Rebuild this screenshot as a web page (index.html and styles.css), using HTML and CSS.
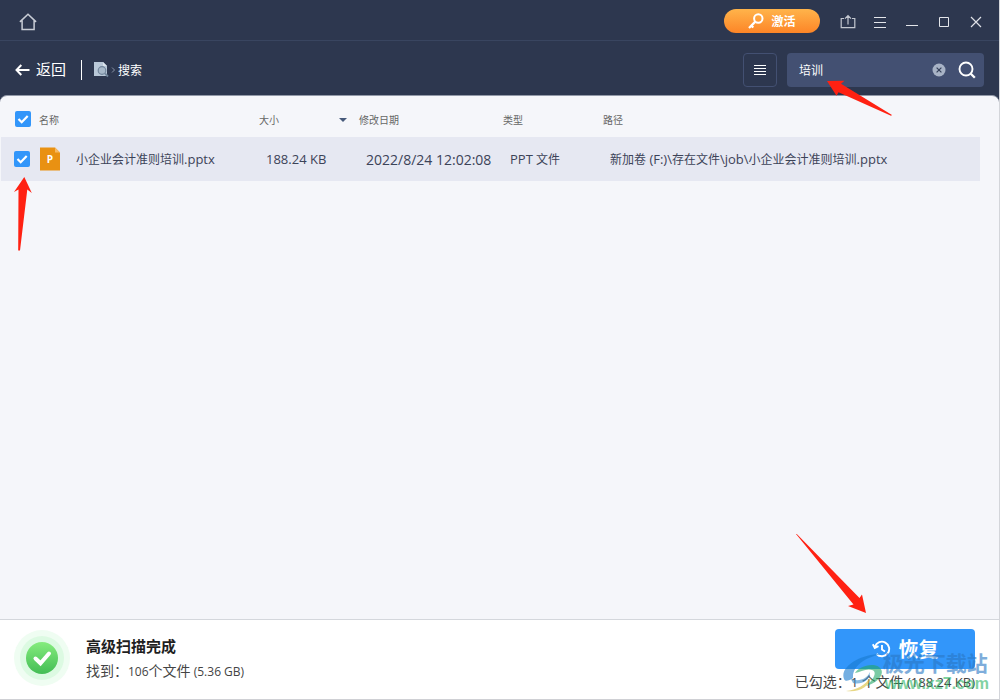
FILE: index.html
```html
<!DOCTYPE html>
<html lang="zh-CN">
<head>
<meta charset="utf-8">
<title>文件恢复</title>
<link rel="stylesheet" href="styles.css">
</head>
<body>
<div class="window">
  <header class="titlebar">
    <button class="icon-btn" aria-label="主页">
      <svg width="18" height="18" viewBox="0 0 18 18" fill="none" stroke="#c9cdd6" stroke-width="1.500"><path d="M.9 8.900 9 1.300l8.100 7.600M3.100 7.500v9.100h12V7.500"/></svg>
    </button>
    <div class="title-actions">
      <button class="activate">
        <svg width="16" height="16" viewBox="0 0 16 16" fill="none" stroke="#fff" stroke-width="2"><circle cx="10.300" cy="5.500" r="4.200"/><path d="M7.300 8.600 1 15M3 12.300l2.300 2.200" stroke-width="2.300"/></svg>
        激活
      </button>
      <button class="icon-btn" aria-label="导出">
        <svg width="16" height="16" viewBox="0 0 16 16" fill="none" stroke="#c3c7d0" stroke-width="1.200"><path d="M4 4.500H1.200v9.200h13.600V4.500H12M8 10.500V1.800M5 4.700l3-3 3 3"/></svg>
      </button>
      <button class="icon-btn" aria-label="菜单">
        <svg width="16" height="16" viewBox="0 0 16 16" stroke="#e3e5ea"><path d="M2 3.500h12M2 8.500h12M2 13.500h12"/></svg>
      </button>
      <button class="icon-btn" aria-label="最小化">
        <svg width="16" height="16" viewBox="0 0 16 16" stroke="#e3e5ea"><path d="M2 11.500h12"/></svg>
      </button>
      <button class="icon-btn" aria-label="最大化">
        <svg width="16" height="16" viewBox="0 0 16 16" fill="none" stroke="#e3e5ea"><path d="M3.500 3.500h9v9h-9z"/></svg>
      </button>
      <button class="icon-btn" aria-label="关闭">
        <svg width="16" height="16" viewBox="0 0 16 16" stroke="#dfe1e7" stroke-width="1.200"><path d="m3 3 10 10M13 3 3 13"/></svg>
      </button>
    </div>
  </header>

  <nav class="toolbar">
    <button class="back">
      <svg width="15" height="12" viewBox="0 0 15 12" fill="none" stroke="#fff" stroke-width="2"><path d="M1.500 6H14.500M6.300 1 1.500 6l4.800 5"/></svg>
      <span class="back-text">返回</span>
    </button>
    <span class="divider"></span>
    <div class="crumbs">
      <svg width="15" height="16" viewBox="0 0 15 16"><path d="M0 0h9l4 4v10H0z" fill="#b9c8d8"/><path d="M9 0v4h4z" fill="#dbe4ed"/><circle cx="8" cy="8.500" r="3.800" fill="#a7b8c9" stroke="#71859b" stroke-width="1.200"/><path d="m11 11.500 3 3" stroke="#71859b" stroke-width="1.800"/></svg>
      <svg width="5" height="8" viewBox="0 0 5 8" fill="none" stroke="#8993a6"><path d="m1 1.500 2.500 2.500L1 6.500"/></svg>
      <span>搜索</span>
    </div>
    <button class="view-btn" aria-label="列表视图">
      <svg width="14" height="12" viewBox="0 0 14 12" stroke="#fff"><path d="M1 1.500h12M1 4.500h12M1 7.500h12M1 10.500h12"/></svg>
    </button>
    <form class="search">
      <input class="search-input" type="text" value="培训" aria-label="搜索">
      <button class="icon-btn" type="reset" aria-label="清除">
        <svg width="14" height="14" viewBox="0 0 14 14"><circle cx="7" cy="7" r="6.500" fill="#a8b3c6"/><path d="m4.600 4.600 4.800 4.800M9.400 4.600 4.600 9.400" stroke="#35405a" stroke-width="1.200"/></svg>
      </button>
      <button class="icon-btn" type="button" aria-label="查找">
        <svg width="18" height="18" viewBox="0 0 18 18" fill="none" stroke="#fff"><circle cx="8" cy="8" r="6.500" stroke-width="1.900"/><path d="m12.800 12.800 4 4" stroke-width="2.300"/></svg>
      </button>
    </form>
  </nav>

  <main class="panel">
    <table class="files">
      <colgroup><col class="c-name"><col class="c-size"><col class="c-date"><col class="c-type"><col></colgroup>
      <thead>
        <tr>
          <th><div class="cell"><input class="check" type="checkbox" checked aria-label="全选">名称</div></th>
          <th><div class="cell sortable">大小<svg width="8" height="5" viewBox="0 0 8 5"><path d="M0 1h8L4 5z" fill="#46597a"/></svg></div></th>
          <th>修改日期</th>
          <th>类型</th>
          <th>路径</th>
        </tr>
      </thead>
      <tbody>
        <tr>
          <td><div class="cell">
            <input class="check" type="checkbox" checked id="f1">
            <svg width="20" height="24" viewBox="0 0 20 24"><path d="M0 .5h15l5 5V23.500H0z" fill="#e99112"/><path d="M15 .5v5h5z" fill="#f6b963"/><text x="10" y="16" class="ppt">P</text></svg>
            <label for="f1" class="filename">小企业会计准则培训<span class="latin">.pptx</span></label>
          </div></td>
          <td><span class="latin">188.24 KB</span></td>
          <td class="date">2022/8/24 12:02:08</td>
          <td><span class="latin">PPT</span> 文件</td>
          <td>新加卷<span class="latin"> (F:)\</span>存在文件<span class="latin">\job\</span>小企业会计准则培训<span class="latin">.pptx</span></td>
        </tr>
      </tbody>
    </table>
  </main>

  <footer class="status">
    <svg class="ok-badge" width="56" height="56" viewBox="0 0 56 56"><defs><linearGradient id="ok" x1="0" y1="0" x2="0" y2="1"><stop offset="0" stop-color="#85ec7d"/><stop offset="1" stop-color="#43bd55"/></linearGradient></defs><circle cx="28" cy="28" r="28" fill="#effdf2"/><circle cx="28" cy="28" r="22" fill="#dcfae2"/><circle cx="28" cy="28" r="16" fill="url(#ok)"/><path d="m21.500 28.500 5 4.800 8.500-9.800" fill="none" stroke="#fff" stroke-width="4" stroke-linecap="round"/></svg>
    <div class="summary">
      <h1 class="done">高级扫描完成</h1>
      <p class="found">找到：<span class="num">106</span>个文件<span class="num"> (5.36 GB)</span></p>
    </div>
    <div class="recover-box">
      <button class="recover">
        <svg width="19" height="18" viewBox="0 0 19 18" fill="none" stroke="#fff" stroke-width="1.900"><path d="M3 6.600A7.300 7.300 0 1 1 4.600 14M.8 4.300l2 3.700 3.700-1.800M10 5v4.500l3 2"/></svg>
        恢复
      </button>
      <p class="selected">已勾选：<span class="latin">1 </span>个文件<span class="latin"> (188.24 KB)</span></p>
    </div>
  </footer>

  <svg class="arrow arrow-search" width="67" height="36" viewBox="0 0 67 36"><path d="m1 1 17.500-.2-3.500 3L66 35l-1 .8-52.500-23.500-2 3.500z"/></svg>
  <svg class="arrow arrow-check" width="18" height="74" viewBox="0 0 18 74"><path d="m10.300 0 7.500 16-4.500-3.500L6 73.500H4.200L4.500 12.500 0 15z"/></svg>
  <svg class="arrow arrow-recover" width="70" height="79" viewBox="0 0 70 79"><path d="m0 0 .8 0L63.500 64l2.500-3.500 4 18.500-18-7 5.500-1.500z"/></svg>

  <div class="watermark">
    <svg width="44" height="40" viewBox="0 0 44 40"><path d="M3 26C-2 13 22 0 42 1 27 3 11 12 12 25c-4 3-8 4-9 1z" fill="#187bd0"/><path d="M14 20c3-6 17-11 24-6 8 6-2 16-13 19 7-6 12-14 6-16-5-2-12 2-17 3z" fill="#23a869"/><path d="M10 26c8 3 16 0 19-7 0 9-9 13-17 11z" fill="#3a8ed0"/><path d="M5 38c11-1 19-6 25-14-1 9-12 16-25 14z" fill="#d8bd32"/></svg>
    <div class="mark-text"><span class="mark-name">极光下载站</span><span class="mark-url">www.xz7.com</span></div>
  </div>
</div>
</body>
</html>
```
FILE: styles.css
```css
* { box-sizing: border-box; }

body {
  margin: 0;
  font-family: "Open Sans", "Noto Sans CJK SC", sans-serif;
  font-size: 12px;
  color: #3c4358;
}

button, input { font: inherit; color: inherit; }

button {
  display: flex;
  align-items: center;
  justify-content: center;
  padding: 0;
  border: 0;
  background: none;
  cursor: pointer;
}

h1, p { margin: 0; }
svg { flex: none; }

.window {
  position: relative;
  display: flex;
  flex-direction: column;
  min-height: 100vh;
  background: #2d374f;
  border-right: 1px solid #d3d5da;
  border-bottom: 1px solid #cfd0d4;
}

.titlebar {
  display: flex;
  align-items: center;
  justify-content: space-between;
  height: 41px;
  padding: 4px 15px 0 19px;
  border-bottom: 1px solid #394560;
}

.title-actions { display: flex; align-items: center; gap: 16px; }

.activate {
  gap: 7px;
  width: 96px;
  height: 24px;
  margin: 0 4px 2px 0;
  border-radius: 12px;
  background: linear-gradient(#ffb44b, #fd8527);
  color: #fff;
  font-size: 12px;
  font-weight: 700;
}

.toolbar {
  display: flex;
  align-items: center;
  height: 54px;
  padding: 4px 15px 0;
  color: #fff;
}

.back { gap: 6px; font-size: 15px; }
.back-text { padding-bottom: 3px; }

.divider { width: 1px; height: 20px; margin: 0 12px 0 15px; background: #fff; }

.crumbs { display: flex; align-items: center; gap: 2px; flex: 1; }

.view-btn {
  width: 34px;
  height: 34px;
  margin-right: 10px;
  border: 1px solid #435072;
  border-radius: 4px;
}

.search {
  display: flex;
  align-items: center;
  gap: 12px;
  width: 197px;
  height: 34px;
  padding: 0 8px 0 12px;
  border-radius: 4px;
  background: #435072;
}

.search-input {
  flex: 1;
  min-width: 0;
  padding: 0;
  border: 0;
  outline: 0;
  background: none;
}

.panel {
  flex: 1;
  padding: 0 19px 0 1px;
  border-top: 1px solid #9299a8;
  border-radius: 7px 7px 0 0;
  background: #f5f6fa;
}

.files {
  width: 100%;
  table-layout: fixed;
  border-collapse: collapse;
  text-align: left;
  white-space: nowrap;
}

.c-name { width: 258px; }
.c-size { width: 100px; }
.c-date { width: 144px; }
.c-type { width: 100px; }

.files th {
  height: 41px;
  padding: 6px 0 0;
  color: #666;
  font-size: 10px;
  font-weight: 400;
}

.files td { height: 44px; padding: 0 0 0 7px; }
.files th:first-child { padding-left: 14px; }
.files td:first-child { padding-left: 13px; }
.files tbody tr { background: #e6e8f2; }

.cell { display: flex; align-items: center; gap: 8px; }
td .cell { gap: 10px; }
.sortable { justify-content: space-between; padding-right: 12px; }
.filename { padding-left: 6px; }

.latin { font-size: 13px; }
.files .date { font-size: 14px; }

.check {
  appearance: none;
  flex: none;
  width: 16px;
  height: 16px;
  margin: 0;
  border: 1px solid #a9b4c8;
  border-radius: 2px;
}

.files th .check { margin-bottom: 2px; }

.check:checked {
  border: 0;
  background: #3296fa url("data:image/svg+xml,%3Csvg xmlns='http://www.w3.org/2000/svg' viewBox='0 0 16 16'%3E%3Cpath d='m3.500 8 3.200 3.200 6-6.200' fill='none' stroke='white' stroke-width='2.200'/%3E%3C/svg%3E");
}

.ppt { fill: #fff; font-size: 10px; font-weight: 700; text-anchor: middle; }

.status {
  display: flex;
  align-items: center;
  gap: 16px;
  height: 80px;
  padding: 0 24px 0 14px;
  border-top: 1px solid #d4d7dc;
  background: #fff;
}

.ok-badge { margin-bottom: 4px; }

.summary { flex: 1; }

.done {
  color: #1f1f1f;
  font-size: 15px;
  font-weight: 700;
  line-height: 24px;
}

.found, .selected {
  color: #444;
  font-size: 14px;
  line-height: 26px;
  white-space: nowrap;
}

.num { font-size: 12px; }

.recover-box {
  display: flex;
  flex-direction: column;
  align-items: flex-end;
  padding-top: 4px;
}

.recover {
  gap: 8px;
  width: 140px;
  height: 40px;
  border-radius: 4px;
  background: #3296fa;
  color: #fff;
  font-size: 20px;
  font-weight: 700;
}

.arrow { position: absolute; fill: #ff2112; pointer-events: none; }
.arrow-search { top: 80px; right: 106px; }
.arrow-check { top: 177px; left: 14px; }
.arrow-recover { right: 133px; bottom: 86px; }

.watermark {
  position: absolute;
  right: 10px;
  bottom: 6px;
  display: flex;
  align-items: flex-end;
  opacity: 0.6;
  pointer-events: none;
}

.watermark svg { margin-right: -2px; }
.mark-text { display: flex; flex-direction: column; font-weight: 700; }
.mark-name { color: #2a78c4; font-size: 21px; line-height: 24px; }
.mark-url {
  padding-left: 2px;
  color: #2db566;
  font-family: "Liberation Sans", sans-serif;
  font-size: 16px;
  line-height: 18px;
}
```
